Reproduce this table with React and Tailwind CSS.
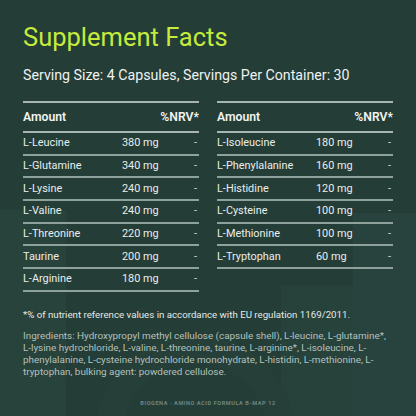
import React from 'react';

const left = [
  ['L-Leucine', '380 mg'],
  ['L-Glutamine', '340 mg'],
  ['L-Lysine', '240 mg'],
  ['L-Valine', '240 mg'],
  ['L-Threonine', '220 mg'],
  ['Taurine', '200 mg'],
  ['L-Arginine', '180 mg'],
];

const right = [
  ['L-Isoleucine', '180 mg'],
  ['L-Phenylalanine', '160 mg'],
  ['L-Histidine', '120 mg'],
  ['L-Cysteine', '100 mg'],
  ['L-Methionine', '100 mg'],
  ['L-Tryptophan', '60 mg'],
];

const FactsTable = ({ rows }) => (
  <div className="w-[176px]">
    <div className="h-[2px] bg-[#a7b6b0]" />
    <div className="flex justify-between items-center h-[28px] text-[12.2px] font-semibold text-[#f1f4f2]">
      <span>Amount</span>
      <span>%NRV*</span>
    </div>
    <div className="h-[2px] bg-[#a7b6b0]" />
    {rows.map(([name, amount]) => (
      <div key={name}>
        <div className="flex items-center h-[20.7px] text-[10.9px] text-[#e9eeec]">
          <span className="w-[99px]">{name}</span>
          <span className="flex-1">{amount}</span>
          <span className="pr-[2px] text-[#cfd8d5]">-</span>
        </div>
        <div className="h-[2px] bg-[#8fa19b]" />
      </div>
    ))}
  </div>
);

export default function App() {
  return (
    <div className="relative w-[416px] h-[416px] overflow-hidden bg-[#243d37] font-['Roboto',_'Noto_Sans',_sans-serif]">
      {/* faint logo watermark behind the content */}
      <div className="absolute left-0 top-[210px] w-[66px] h-[206px] bg-[#28423c]" />
      <div className="absolute left-[353px] top-[213px] w-[63px] h-[203px] bg-[#28433d]" />
      <div className="absolute left-[281px] top-[285px] w-[72px] h-[131px] bg-[#27413b]" />
      <div className="absolute left-[95px] top-[335px] w-[200px] h-[200px] rounded-full border-[28px] border-[#263f39]" />

      <div className="relative px-[23px] pt-[22px]">
        <h1 className="text-[25.5px] leading-[30px] text-[#c5eb3d] font-normal">
          Supplement Facts
        </h1>
        <p className="mt-[14px] text-[14.2px] leading-[18px] text-[#eef2f0]">
          Serving Size: 4 Capsules, Servings Per Container: 30
        </p>

        <div className="mt-[17px] flex gap-[18px]">
          <FactsTable rows={left} />
          <FactsTable rows={right} />
        </div>

        <p className="mt-[16px] text-[9.7px] leading-[14px] text-[#e4eae7] whitespace-nowrap">
          *% of nutrient reference values in accordance with EU regulation 1169/2011.
        </p>
        <p className="mt-[8px] text-[9.9px] leading-[12.2px] text-[#b5c1bd]">
          Ingredients: Hydroxypropyl methyl cellulose (capsule shell), L-leucine, L-glutamine*,
          <br />
          L-lysine hydrochloride, L-valine, L-threonine, taurine, L-arginine*, L-isoleucine, L-
          <br />
          phenylalanine, L-cysteine hydrochloride monohydrate, L-histidin, L-methionine, L-
          <br />
          tryptophan, bulking agent: powdered cellulose.
        </p>
        <p className="mt-[20px] text-center text-[5.6px] leading-[8px] font-bold tracking-[0.55px] text-[#6f8681]">
          BIOGENA · AMINO ACID FORMULA B-MAP 12
        </p>
      </div>
    </div>
  );
}
